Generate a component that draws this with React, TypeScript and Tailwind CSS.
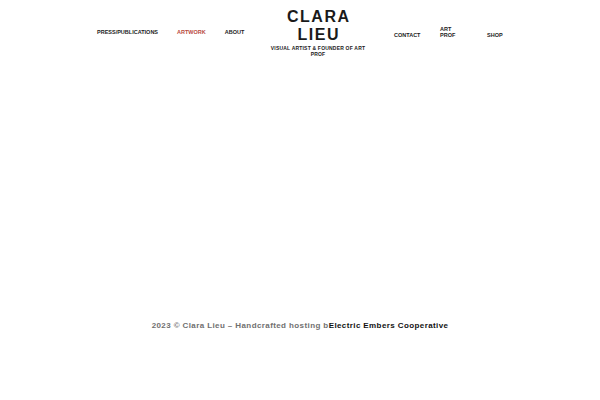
import React from "react";

const font = { fontFamily: '"Liberation Sans", Arial, sans-serif' };

function NavLink({ label, active }: { label: string; active?: boolean }) {
  return (
    <a
      href="#"
      className={`block text-[5.5px] font-bold uppercase leading-[6px] whitespace-nowrap ${
        active ? "text-[#b84a3e]" : "text-[#222]"
      }`}
    >
      {label}
    </a>
  );
}

export default function App() {
  return (
    <div className="w-[600px] h-[400px] bg-white flex flex-col" style={font}>
      <header className="h-[60px] flex items-start">
        <nav className="ml-[97px] w-[168px] mt-[29px] flex items-center gap-[19px]">
          <NavLink label="Press/Publications" />
          <NavLink label="Artwork" active />
          <NavLink label="About" />
        </nav>

        <div className="w-[106px] mt-[8px] flex flex-col items-center">
          <h1 className="text-[16px] font-bold tracking-[1.5px] leading-[18px] text-[#1a1a1a] text-center pl-[1.5px]">
            CLARA
            <br />
            LIEU
          </h1>
          <p className="mt-[1px] text-[5px] font-bold tracking-[0.2px] leading-[6px] text-[#222] text-center uppercase">
            Visual Artist &amp; Founder of Art Prof
          </p>
        </div>

        <nav className="ml-[23px] mt-[26px] flex items-end">
          <div className="w-[46px]">
            <NavLink label="Contact" />
          </div>
          <div className="w-[47px] flex flex-col">
            <span className="block text-[5.5px] font-bold leading-[6px] text-[#222]">ART</span>
            <span className="block text-[5.5px] font-bold leading-[6px] text-[#222]">PROF</span>
          </div>
          <NavLink label="Shop" />
        </nav>
      </header>

      <main className="h-[261px]" />

      <footer className="flex justify-center">
        <p className="text-[8px] font-bold tracking-[0.4px] leading-[10px] whitespace-nowrap">
          <span className="text-[#707070]">2023 © Clara Lieu – Handcrafted hosting b</span>
          <a href="#" className="text-[#111]">Electric Embers Cooperative</a>
        </p>
      </footer>
    </div>
  );
}
